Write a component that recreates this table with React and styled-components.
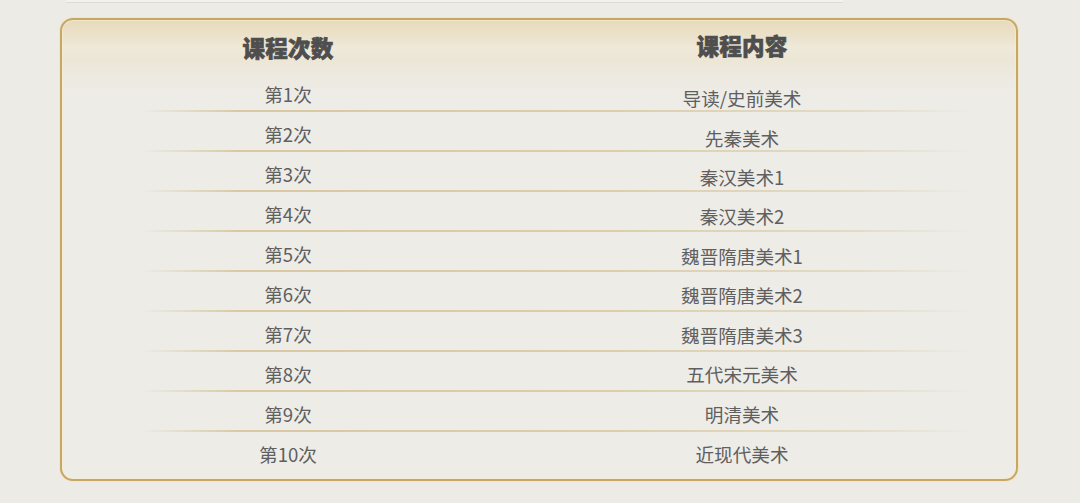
import React from "react";
import styled, { createGlobalStyle } from "styled-components";

const Global = createGlobalStyle`
  html, body { margin: 0; padding: 0; background: #ecebe6; }
  body { font-family: "Noto Sans CJK SC", "Noto Sans", sans-serif; }
`;

const Page = styled.div`
  width: 1080px;
  height: 503px;
  background: #ecebe6;
  overflow: hidden;
`;

const TopStrip = styled.div`
  margin-left: 66px;
  width: 777px;
  height: 2px;
  background: #f3f2ed;
  border-bottom: 1px solid #dedbd2;
`;

const Card = styled.div`
  margin: 15px 0 0 60px;
  width: 958px;
  height: 463px;
  box-sizing: border-box;
  border: 2px solid #c7a765;
  border-radius: 13px;
  box-shadow: 0 0 0 1px rgba(244, 226, 180, 0.6), inset 0 0 0 1px rgba(248, 236, 205, 0.6);
  background:
    linear-gradient(to bottom,
      #e7dabb 0px,
      #ebe1c9 14px,
      #efe9da 28px,
      #ece6d6 40px,
      #edeae2 58px,
      #edece7 80px,
      #edece7 100%);
  padding-right: 46px;
`;

const Grid = styled.div`
  display: grid;
  grid-template-columns: 452px 456px;
`;

const HeadCell = styled.div`
  height: 52px;
  line-height: 54px;
  text-align: center;
  font-size: 22.5px;
  font-weight: 900;
  color: #4e4e4e;
  -webkit-text-stroke: 0.7px #4e4e4e;
  letter-spacing: 0.3px;
  transform: translateY(${(p) => p.$dy || 0}px);
`;

const Row = styled.div`
  display: grid;
  grid-column: 1 / span 2;
  grid-template-columns: 452px 456px;
  height: 40px;
  box-sizing: border-box;
  background: ${(p) =>
    p.$last
      ? "none"
      : `linear-gradient(to right, rgba(214,196,155,0) 0%, #d9c8a2 12%, #ddcdab 55%, #e3dac5 85%, rgba(226,216,194,0) 100%) no-repeat 78px 100% / 835px 2px`};
`;

const Cell = styled.div`
  text-align: center;
  font-size: 18.6px;
  line-height: 34px;
  padding-top: ${(p) => p.$pt}px;
  color: #5f5f5f;
`;

const rows = [
  ["第1次", "导读/史前美术", 4],
  ["第2次", "先秦美术", 4],
  ["第3次", "秦汉美术1", 3],
  ["第4次", "秦汉美术2", 2],
  ["第5次", "魏晋隋唐美术1", 2],
  ["第6次", "魏晋隋唐美术2", 1],
  ["第7次", "魏晋隋唐美术3", 1],
  ["第8次", "五代宋元美术", 0],
  ["第9次", "明清美术", 0],
  ["第10次", "近现代美术", 0],
];

export default function App() {
  return (
    <Page>
      <Global />
      <TopStrip />
      <Card>
        <Grid>
          <HeadCell>课程次数</HeadCell>
          <HeadCell $dy={-2}>课程内容</HeadCell>
          {rows.map(([a, b, off], i) => (
            <Row key={a} $last={i === rows.length - 1}>
              <Cell $pt={5}>{a}</Cell>
              <Cell $pt={5 + off}>{b}</Cell>
            </Row>
          ))}
        </Grid>
      </Card>
    </Page>
  );
}
